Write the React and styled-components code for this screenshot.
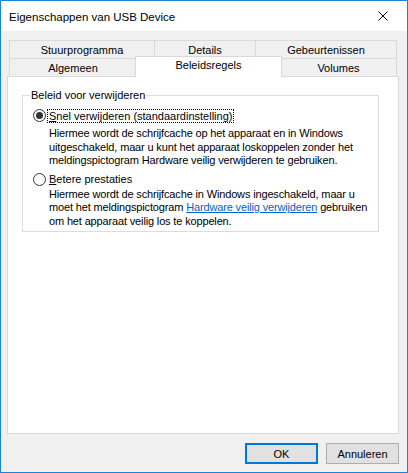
import React from "react";
import styled, { createGlobalStyle } from "styled-components";

const GlobalStyle = createGlobalStyle`
  html, body {
    margin: 0;
    padding: 0;
    background: #ffffff;
  }
  body {
    font-family: "Liberation Sans", Arial, sans-serif;
    font-size: 11px;
    color: #000000;
  }
`;

const topTabs = [
  { label: "Stuurprogramma", width: 146 },
  { label: "Details", width: 102 },
  { label: "Gebeurtenissen", width: 142 },
];

const bottomTabs = [
  { label: "Algemeen", width: 128 },
  { label: "Beleidsregels", width: 147, active: true },
  { label: "Volumes", width: 117 },
];

const App = () => {
  return (
    <>
      <GlobalStyle />
      <Window>
        <TitleBar>
          <Title>Eigenschappen van USB Device</Title>
          <CloseButton>
            <svg width="10" height="10" viewBox="0 0 10 10">
              <path d="M0.5 0.5 L9.5 9.5 M9.5 0.5 L0.5 9.5" stroke="#000" strokeWidth="1" />
            </svg>
          </CloseButton>
        </TitleBar>
        <Body>
          <TabStrip>
            <TabRow>
              {topTabs.map((t) => (
                <Tab key={t.label} $width={t.width}>
                  {t.label}
                </Tab>
              ))}
            </TabRow>
            <TabRow>
              {bottomTabs.map((t, i) => (
                <Tab
                  key={t.label}
                  $width={t.width}
                  $active={t.active}
                  $afterActive={i > 0 && bottomTabs[i - 1].active}
                >
                  {t.label}
                </Tab>
              ))}
            </TabRow>
          </TabStrip>
          <Panel>
            <GroupBox>
              <Legend>Beleid voor verwijderen</Legend>
              <OptionRow>
                <Radio $checked />
                <OptionLabel $focused>
                  <u>S</u>nel verwijderen (standaardinstelling)
                </OptionLabel>
              </OptionRow>
              <Description>
                Hiermee wordt de schrijfcache op het apparaat en in Windows
                <br />
                uitgeschakeld, maar u kunt het apparaat loskoppelen zonder het
                <br />
                meldingspictogram Hardware veilig verwijderen te gebruiken.
              </Description>
              <OptionRow $second>
                <Radio />
                <OptionLabel>
                  <u>B</u>etere prestaties
                </OptionLabel>
              </OptionRow>
              <Description $last>
                Hiermee wordt de schrijfcache in Windows ingeschakeld, maar u
                <br />
                moet het meldingspictogram <LinkText>Hardware veilig verwijderen</LinkText> gebruiken
                <br />
                om het apparaat veilig los te koppelen.
              </Description>
            </GroupBox>
          </Panel>
          <ButtonBar>
            <DialogButton $default>OK</DialogButton>
            <DialogButton>Annuleren</DialogButton>
          </ButtonBar>
        </Body>
      </Window>
    </>
  );
};

export default App;

const Window = styled.div`
  width: 408px;
  height: 473px;
  box-sizing: border-box;
  border: 1px solid #1883d7;
  background: #f0f0f0;
  display: flex;
  flex-direction: column;
`;

const TitleBar = styled.div`
  height: 30px;
  flex-shrink: 0;
  background: #ffffff;
  display: flex;
  align-items: center;
  justify-content: space-between;
  padding-left: 8px;
`;

const Title = styled.div`
  font-size: 11.5px;
  margin-top: 1px;
`;

const CloseButton = styled.div`
  width: 46px;
  height: 30px;
  display: flex;
  align-items: center;
  justify-content: center;
  margin-right: 1px;
`;

const Body = styled.div`
  flex: 1;
  display: flex;
  flex-direction: column;
  padding: 9px 8px 8px 6px;
  min-height: 0;
`;

const TabStrip = styled.div`
  display: flex;
  flex-direction: column;
  margin-left: 2px;
`;

const TabRow = styled.div`
  display: flex;
  align-items: flex-start;
  height: 18px;
`;

const Tab = styled.div`
  box-sizing: border-box;
  width: ${(p) => p.$width}px;
  height: ${(p) => (p.$active ? 21 : 18)}px;
  margin-top: ${(p) => (p.$active ? -2 : 0)}px;
  margin-left: ${(p) => (p.$active || p.$afterActive ? -2 : -1)}px;
  border: 1px solid #d9d9d9;
  border-bottom: ${(p) => (p.$active ? "none" : "0")};
  background: ${(p) => (p.$active ? "#ffffff" : "#f0f0f0")};
  position: ${(p) => (p.$active ? "relative" : "static")};
  z-index: ${(p) => (p.$active ? 2 : "auto")};
  display: flex;
  justify-content: center;
  align-items: ${(p) => (p.$active ? "flex-start" : "center")};
  padding-top: ${(p) => (p.$active ? 2 : 1)}px;
  font-size: 11px;
  white-space: nowrap;

  &:first-child {
    margin-left: 0;
  }
`;

const Panel = styled.div`
  flex: 1;
  background: #ffffff;
  border: 1px solid #d9d9d9;
  position: relative;
  z-index: 1;
  min-height: 0;
`;

const GroupBox = styled.fieldset`
  box-sizing: border-box;
  width: 357px;
  margin: 11px 0 0 14px;
  padding: 0 0 3px 10px;
  border: 1px solid #dcdcdc;
  min-inline-size: 0;
`;

const Legend = styled.legend`
  padding: 0 1px;
  margin-left: -3px;
  line-height: 14px;
  font-size: 11px;
`;

const OptionRow = styled.div`
  display: flex;
  align-items: center;
  height: 15px;
  margin-top: ${(p) => (p.$second ? 4 : 6)}px;
`;

const Radio = styled.span`
  box-sizing: border-box;
  width: 13px;
  height: 13px;
  border-radius: 50%;
  border: 1px solid #333333;
  background: #ffffff;
  display: flex;
  align-items: center;
  justify-content: center;
  flex-shrink: 0;

  &::after {
    content: "";
    width: 7px;
    height: 7px;
    border-radius: 50%;
    background: ${(p) => (p.$checked ? "#333333" : "transparent")};
  }
`;

const OptionLabel = styled.span`
  margin-left: 1px;
  border: 1px ${(p) => (p.$focused ? "dotted #000000" : "solid transparent")};
  padding: 0 1px 0 1px;
  line-height: 12px;
  white-space: nowrap;

  u {
    text-decoration: underline;
    text-underline-offset: 1px;
  }
`;

const Description = styled.div`
  margin-left: 16px;
  margin-top: ${(p) => (p.$last ? 1 : 4)}px;
  line-height: 13.5px;
  white-space: nowrap;
  letter-spacing: -0.15px;
`;

const LinkText = styled.span`
  color: #0066cc;
  text-decoration: underline;
`;

const ButtonBar = styled.div`
  display: flex;
  justify-content: flex-end;
  gap: 8px;
  margin-top: 9px;
`;

const DialogButton = styled.div`
  box-sizing: border-box;
  width: 73px;
  height: 21px;
  background: #e1e1e1;
  border: ${(p) => (p.$default ? "2px solid #0078d7" : "1px solid #adadad")};
  display: flex;
  align-items: center;
  justify-content: center;
  font-size: 11px;
`;
